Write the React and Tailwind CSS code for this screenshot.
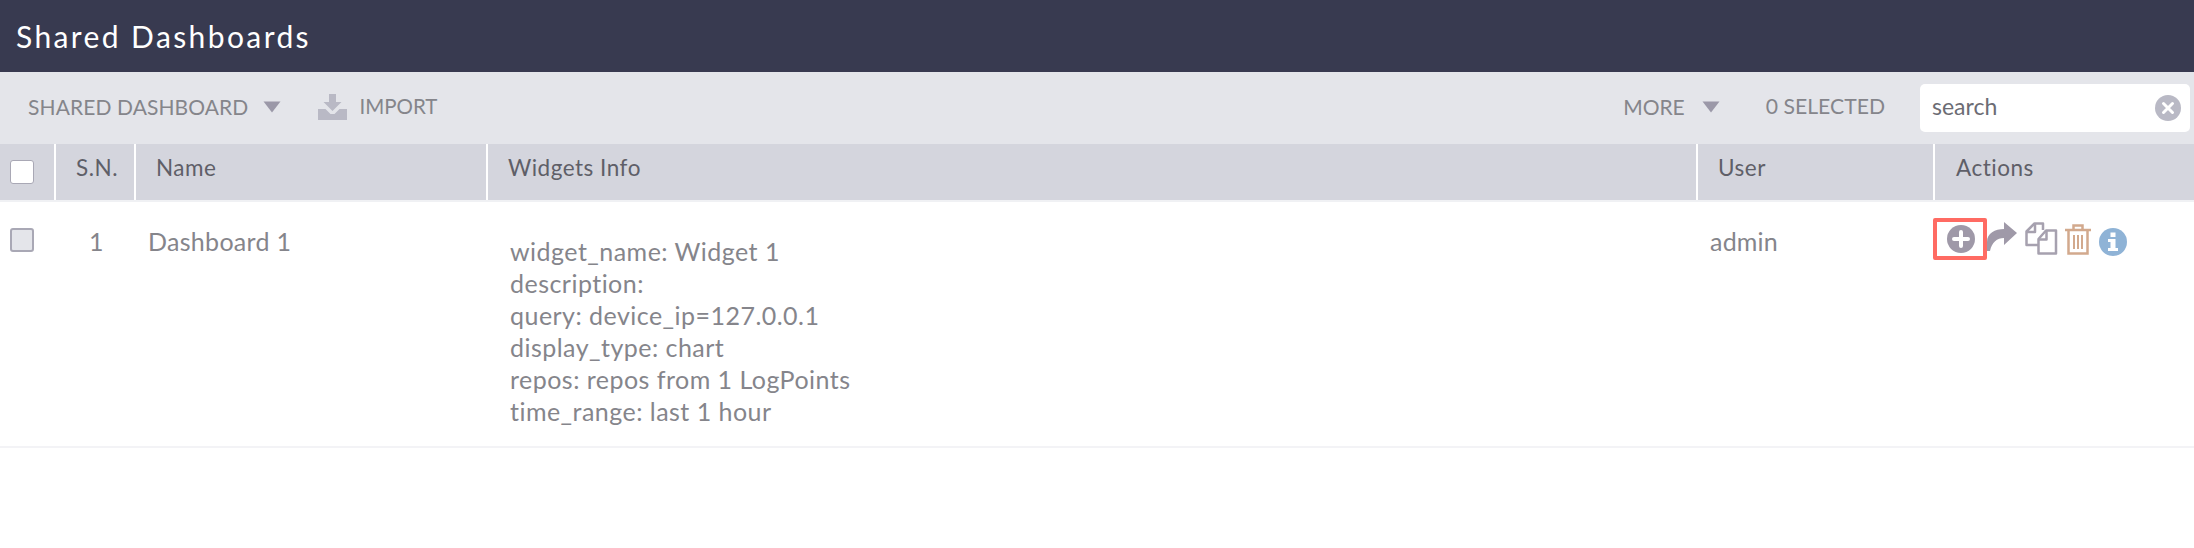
const font = "font-['Lato','Noto_Sans',sans-serif]";

function Caret() {
  return (
    <svg width="18" height="12" viewBox="0 0 18 12" className="shrink-0">
      <path d="M0.5 0.5H17.5L9 11.5Z" fill="#9b98a8" />
    </svg>
  );
}

function ImportIcon() {
  return (
    <svg width="29" height="26" viewBox="0 0 29 26" className="shrink-0">
      <path d="M11 0H18V8H23.5L14.5 17L5.5 8H11Z" fill="#b9b9c5" />
      <path d="M0 15H7.5L12.5 20H16.5L21.5 15H29V26H0Z" fill="#b9b9c5" />
    </svg>
  );
}

function ClearIcon() {
  return (
    <svg width="26" height="26" viewBox="0 0 26 26" className="shrink-0">
      <circle cx="13" cy="13" r="13" fill="#b9b9c5" />
      <path d="M8.5 8.5L17.5 17.5M17.5 8.5L8.5 17.5" stroke="#fff" strokeWidth="3" strokeLinecap="round" />
    </svg>
  );
}

function PlusIcon() {
  return (
    <svg width="28" height="28" viewBox="0 0 28 28">
      <circle cx="14" cy="14" r="14" fill="#9f99a8" />
      <path d="M14 7V21M7 14H21" stroke="#fff" strokeWidth="4" strokeLinecap="round" />
    </svg>
  );
}

function ShareIcon() {
  return (
    <svg width="30" height="30" viewBox="0 0 30 30">
      <path d="M0 29V20C0 11 8 7 17 7V0L30 11L17 23V16C10 16 5 20 3 29Z" fill="#9f99a8" />
    </svg>
  );
}

function CopyIcon() {
  return (
    <svg width="33" height="33" viewBox="0 0 33 33" fill="none" stroke="#a6a1af" strokeWidth="2.5" strokeLinejoin="round">
      <path d="M13 23H1.5V9.5L9.5 1.5H18V8" />
      <path d="M1.5 10H10V1.5" />
      <path d="M13.5 17L21 8.5H31V31.5H13.5Z" />
      <path d="M13.5 17.5H21.5V8.5" />
    </svg>
  );
}

function TrashIcon() {
  return (
    <svg width="26" height="31" viewBox="0 0 26 31" fill="none" stroke="#d2a98d" strokeWidth="2.5">
      <path d="M0 6H26" />
      <path d="M8.5 6V1.5H17.5V6" />
      <path d="M3.5 6V29.5H22.5V6" />
      <path d="M9 11V25M13 11V25M17 11V25" strokeWidth="2" />
    </svg>
  );
}

function InfoIcon() {
  return (
    <svg width="28" height="28" viewBox="0 0 28 28">
      <circle cx="14" cy="14" r="14" fill="#8fb3d6" />
      <rect x="11.5" y="4.5" width="5" height="4.5" fill="#fff" />
      <path d="M9 11H16.5V20H19V23H9V20H11.5V14H9Z" fill="#fff" />
    </svg>
  );
}

const widgetLines = [
  "widget_name: Widget 1",
  "description:",
  "query: device_ip=127.0.0.1",
  "display_type: chart",
  "repos: repos from 1 LogPoints",
  "time_range: last 1 hour",
];

export default function App() {
  return (
    <div className={`${font} w-[2194px] h-[548px] bg-white overflow-hidden`}>
      <div className="h-[72px] bg-[#383a50] flex items-center pl-[16px] text-white text-[30px] tracking-[2.4px]">
        Shared Dashboards
      </div>

      <div className="h-[72px] bg-[#e4e5ea] flex items-center text-[#85858b] text-[21px] pl-[28px] pr-[4px] pb-[3px]">
        <span className="tracking-[0.1px]">SHARED DASHBOARD</span>
        <span className="ml-[15px]"><Caret /></span>
        <span className="ml-[37px]"><ImportIcon /></span>
        <span className="ml-[12px] text-[20.5px]">IMPORT</span>
        <span className="ml-auto text-[21px]">MORE</span>
        <span className="ml-[17px]"><Caret /></span>
        <span className="ml-[46px] text-[21.2px]">0 SELECTED</span>
        <div className="ml-[35px] w-[270px] h-[48px] mt-[3px] bg-white rounded-[5px] flex items-center justify-between pl-[12px] pr-[9px] text-[#6c6c74] text-[23px]">
          <span className="-mt-[3px]">search</span>
          <ClearIcon />
        </div>
      </div>

      <div className="h-[56px] bg-[#d4d5dd] flex text-[#5f5f68] text-[22.5px] leading-[48px] tracking-[0.5px]">
        <div className="w-[56px] border-r-2 border-white pl-[10px] pt-[16px]">
          <div className="w-[24px] h-[24px] bg-white border border-[#a9a8b5] rounded-[3px]" />
        </div>
        <div className="w-[80px] border-r-2 border-white pl-[20px]">S.N.</div>
        <div className="w-[352px] border-r-2 border-white pl-[20px]">Name</div>
        <div className="w-[1210px] border-r-2 border-white pl-[20px]">Widgets Info</div>
        <div className="w-[237px] border-r-2 border-white pl-[20px]">User</div>
        <div className="flex-1 pl-[21px]">Actions</div>
      </div>

      <div className="h-[2px] bg-[#f0f1f4]" />

      <div className="h-[246px] flex text-[#85858b] text-[25px] border-b-2 border-[#f3f3f6]">
        <div className="w-[56px] pl-[10px] pt-[26px]">
          <div className="w-[24px] h-[24px] bg-[#e4e5ea] border-2 border-[#a9a8b5] rounded-[3px]" />
        </div>
        <div className="w-[80px] pl-[33px] pt-[23px] leading-[32px]">1</div>
        <div className="w-[352px] pl-[12px] pt-[23px] leading-[32px] tracking-[0.3px]">Dashboard 1</div>
        <div className="w-[1210px] pl-[22px] pt-[33px] leading-[32px] tracking-[0.47px]">
          {widgetLines.map((line) => (
            <div key={line}>{line}</div>
          ))}
        </div>
        <div className="w-[237px] pl-[12px] pt-[23px] leading-[32px] tracking-[0.2px]">admin</div>
        <div className="flex-1 pt-[16px] flex items-start">
          <div className="w-[54px] h-[42px] -ml-[2px] pl-[2px] border-4 border-[#ff6b63] rounded-[2px] flex items-center justify-center">
            <PlusIcon />
          </div>
          <div className="mt-[4px]"><ShareIcon /></div>
          <div className="ml-[8px] mt-[4px]"><CopyIcon /></div>
          <div className="ml-[7px] mt-[6px]"><TrashIcon /></div>
          <div className="ml-[8px] mt-[10px]"><InfoIcon /></div>
        </div>
      </div>
    </div>
  );
}
